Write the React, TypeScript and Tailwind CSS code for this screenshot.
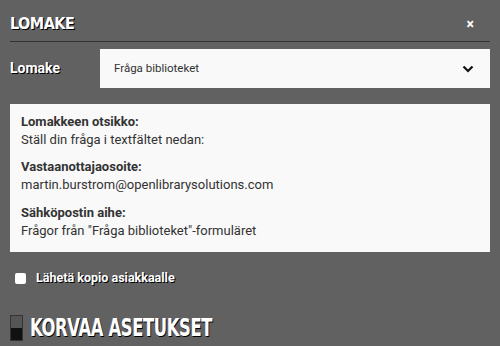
import React from "react";

const shadow = "[text-shadow:1px_1px_0_#000]";

export default function App() {
  return (
    <div className="w-[500px] h-[346px] bg-[#616161] overflow-hidden font-['Roboto',sans-serif]">
      <div className="px-[10px]">
        <div className="h-[42px] flex items-center justify-between border-b border-[#333] pt-[6px]">
          <div className={`text-white font-bold text-[16px] font-['DejaVu_Sans_Condensed',sans-serif] tracking-[-0.5px] ${shadow}`}>LOMAKE</div>
          <div className="text-white text-[14px] font-bold mr-[16px] leading-none">×</div>
        </div>
        <div className="flex items-center mt-[7px] h-[39px]">
          <div className={`w-[90px] text-white font-bold text-[14px] ${shadow}`}>Lomake</div>
          <div className="flex-1 h-full bg-[#f9f9f9] flex items-center justify-between pl-[14px] pr-[16px]">
            <span className="text-[#333] text-[11.5px]">Fråga biblioteket</span>
            <svg width="12" height="8" viewBox="0 0 12 8"><path d="M1.5 1.5 L6 6 L10.5 1.5" stroke="#111" strokeWidth="2.2" fill="none" /></svg>
          </div>
        </div>
        <div className="mt-[16px] h-[148px] bg-[#f9f9f9] px-[11px] pt-[9px] text-[#333] text-[13px] leading-[18px]">
          <div className="font-bold">Lomakkeen otsikko:</div>
          <div>Ställ din fråga i textfältet nedan:</div>
          <div className="font-bold mt-[9px]">Vastaanottajaosoite:</div>
          <div>martin.burstrom@openlibrarysolutions.com</div>
          <div className="font-bold mt-[10px]">Sähköpostin aihe:</div>
          <div>Frågor från "Fråga biblioteket"-formuläret</div>
        </div>
        <div className="flex items-center mt-[17px] pl-[5px]">
          <div className="w-[11px] h-[11px] rounded-[2px] bg-white" />
          <span className={`ml-[10px] text-white font-bold text-[12.5px] ${shadow}`}>Lähetä kopio asiakkaalle</span>
        </div>
        <div className="flex items-center mt-[27px]">
          <div className="w-[13px] h-[26px] flex flex-col border border-[#333]">
            <div className="flex-1 bg-[#555]" />
            <div className="flex-1 bg-[#111]" />
          </div>
          <div className={`ml-[7px] text-white font-bold text-[24px] leading-none font-['DejaVu_Sans_Condensed',sans-serif] tracking-[-0.5px] origin-left scale-x-[0.76] ${shadow}`}>KORVAA ASETUKSET</div>
        </div>
      </div>
    </div>
  );
}
